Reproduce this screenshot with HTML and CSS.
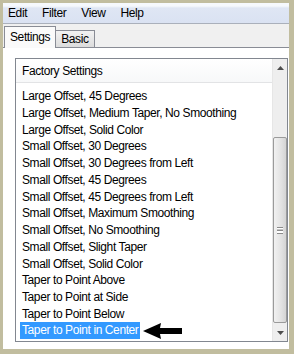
FILE: index.html
```html
<!DOCTYPE html>
<html>
<head>
  <meta charset="utf-8">
  <title>Drop Shadow Settings</title>
  <link rel="stylesheet" href="styles.css">
</head>
<body>
  <div class="window">
    <div class="menubar">
      <span>Edit</span>
      <span>Filter</span>
      <span>View</span>
      <span>Help</span>
    </div>

    <div class="tabstrip">
      <div class="tab active">Settings</div>
      <div class="tab">Basic</div>
    </div>

    <div class="panel">
      <div class="listbox">
        <div class="list">
          <div class="list-head">Factory Settings</div>
          <ul class="items">
            <li>Large Offset, 45 Degrees</li>
            <li>Large Offset, Medium Taper, No Smoothing</li>
            <li>Large Offset, Solid Color</li>
            <li>Small Offset, 30 Degrees</li>
            <li>Small Offset, 30 Degrees from Left</li>
            <li>Small Offset, 45 Degrees</li>
            <li>Small Offset, 45 Degrees from Left</li>
            <li>Small Offset, Maximum Smoothing</li>
            <li>Small Offset, No Smoothing</li>
            <li>Small Offset, Slight Taper</li>
            <li>Small Offset, Solid Color</li>
            <li>Taper to Point Above</li>
            <li>Taper to Point at Side</li>
            <li>Taper to Point Below</li>
            <li><span class="selected">Taper to Point in Center</span><svg class="pointer" width="40" height="18" viewBox="0 0 40 18"><polygon points="0,9 18,1 17,6 39,6 39,12 17,12 18,17" fill="#000"/></svg></li>
          </ul>
        </div>
        <div class="scrollbar">
          <div class="sb-btn"><svg width="7" height="4" viewBox="0 0 7 4"><polygon points="0,4 3.5,0 7,4" fill="#4d4d4d"/></svg></div>
          <div class="sb-track">
            <div class="sb-thumb"><span class="grip"></span></div>
          </div>
          <div class="sb-btn"><svg width="7" height="4" viewBox="0 0 7 4"><polygon points="0,0 7,0 3.5,4" fill="#4d4d4d"/></svg></div>
        </div>
      </div>
    </div>
  </div>
</body>
</html>
```

FILE: styles.css
```css
body {
  margin: 0;
  background: #c1bd9f;
  font-family: 'Liberation Sans', Arial, sans-serif;
  font-size: 12px;
  letter-spacing: -0.4px;
  color: #000;
}

.window {
  margin: 3px 5px 5px 3px;
  height: 346px;
  background: #fff;
  display: flex;
  flex-direction: column;
  overflow: hidden;
}

.menubar {
  height: 20px;
  display: flex;
  align-items: center;
  padding-left: 5px;
  background: linear-gradient(#f6f9fd 0, #f6f9fd 3px, #dfe6f4 5px, #dae2f2 100%);
  border-bottom: 1px solid #aab0bb;
}

.menubar span {
  margin-right: 15px;
}

.tabstrip {
  height: 23px;
  display: flex;
  align-items: flex-end;
  padding-left: 1px;
  background: #f0f0f0;
  border-bottom: 1px solid #898c95;
}

.tab {
  border: 1px solid #898c95;
  border-bottom: none;
  padding: 0 5px;
  height: 16px;
  line-height: 17px;
  background: linear-gradient(#f2f2f2, #dcdcdc);
  margin-left: -1px;
}

.tab.active {
  height: 21px;
  line-height: 20px;
  background: #fafafa;
  position: relative;
  bottom: -1px;
  z-index: 1;
  margin-left: 0;
}

.panel {
  flex: 1;
  padding: 10px 1px 7px 12px;
}

.listbox {
  height: 282px;
  border: 1px solid #828790;
  display: flex;
}

.list {
  flex: 1;
  overflow: hidden;
}

.list-head {
  height: 23px;
  line-height: 24px;
  padding-left: 6px;
  border-bottom: 1px solid #e2e3e5;
  background: linear-gradient(#fff, #f7f8f9);
}

.items {
  list-style: none;
  margin: 0;
  padding: 5px 0 0 4px;
}

.items li {
  height: 16.75px;
  line-height: 16.75px;
  padding-left: 2px;
  white-space: nowrap;
  display: flex;
  align-items: center;
}

.selected {
  background: #3399ff;
  color: #fff;
  margin-left: -2px;
  padding: 0 2px;
  line-height: 17px;
}

.pointer {
  margin-left: 3px;
}

.scrollbar {
  width: 14px;
  display: flex;
  flex-direction: column;
  background: #eeeeee;
  border-left: 1px solid #e6e6e6;
}

.sb-btn {
  height: 17px;
  display: flex;
  align-items: center;
  justify-content: center;
}

.sb-track {
  flex: 1;
  padding: 61px 0 1px;
  display: flex;
}

.sb-thumb {
  flex: 1;
  border: 1px solid #9a9a9a;
  border-radius: 2px;
  background: linear-gradient(90deg, #f1f1f1, #e2e2e2 60%, #d4d4d4);
  display: flex;
  align-items: center;
  justify-content: center;
}

.grip {
  width: 6px;
  height: 5px;
  border-top: 1px solid #8a8a8a;
  border-bottom: 1px solid #8a8a8a;
  background: linear-gradient(#fff 0, #fff 1px, #8a8a8a 2px, #8a8a8a 3px, #fff 3px);
}
```
